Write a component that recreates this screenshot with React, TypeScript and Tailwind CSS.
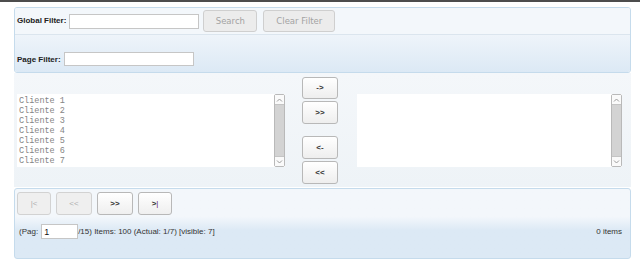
import React from 'react';

const sans = "font-['Liberation_Sans',Arial,sans-serif]";
const dejavu = "font-['DejaVu_Sans',Verdana,sans-serif]";

function Scrollbar() {
  return (
    <div className="flex w-[11px] shrink-0 flex-col rounded-[2px] border border-[#b9b9b9] bg-[#f4f4f4]">
      <div className="flex h-[10px] items-center justify-center border-b border-[#c4c4c4] bg-[#fafafa]">
        <svg width="7" height="4" viewBox="0 0 7 4">
          <path d="M1 3.5 L3.5 1 L6 3.5" fill="none" stroke="#9a9a9a" strokeWidth="1" />
        </svg>
      </div>
      <div className="flex-1 bg-[#d3d3d3]" />
      <div className="flex h-[10px] items-center justify-center border-t border-[#c4c4c4] bg-[#fafafa]">
        <svg width="7" height="4" viewBox="0 0 7 4">
          <path d="M1 0.5 L3.5 3 L6 0.5" fill="none" stroke="#9a9a9a" strokeWidth="1" />
        </svg>
      </div>
    </div>
  );
}

function ListBox({ items, width }: { items: string[]; width: string }) {
  return (
    <div className={`flex h-[73px] bg-white ${width}`}>
      <div className="flex-1 overflow-hidden pl-[2px] pt-[2px] font-['Liberation_Mono','DejaVu_Sans_Mono',monospace] text-[8.5px] leading-[10px] text-[#858585]">
        {items.map((it) => (
          <div key={it} className="whitespace-pre">
            {it}
          </div>
        ))}
      </div>
      <Scrollbar />
    </div>
  );
}

function MoveButton({ label, className = '' }: { label: string; className?: string }) {
  return (
    <button
      className={`flex w-[36px] items-center justify-center rounded-[3px] border border-[#b8b8b8] bg-gradient-to-b from-white to-[#eeeeee] ${sans} text-[8px] font-bold text-[#333] ${className}`}
    >
      {label}
    </button>
  );
}

function PagerButton({ children, disabled, width }: { children: React.ReactNode; disabled?: boolean; width: string }) {
  return (
    <button
      className={`flex h-[23px] items-center justify-center rounded-[3px] border ${width} ${sans} text-[8px] ${
        disabled
          ? 'border-[#d2d2d2] bg-[#efefef] text-[#b0b0b0]'
          : 'border-[#b8b8b8] bg-gradient-to-b from-white to-[#efefef] font-bold text-[#333]'
      }`}
    >
      {children}
    </button>
  );
}

export default function App() {
  const clientes = Array.from({ length: 7 }, (_, i) => `Cliente ${i + 1}`);

  return (
    <div className="h-[273px] w-[640px] overflow-hidden bg-white">
      <div className="h-[2px] bg-[#4d4d4d]" />

      {/* Filters */}
      <div className="ml-[14px] mr-[9px] mt-[5px] overflow-hidden rounded-[3px] border border-[#c5dbec]">
        <div className="flex h-[27px] items-center border-b border-[#dbe5ee] bg-[#f3f7fb] pl-[2px]">
          <span className={`${sans} text-[8px] font-bold text-[#222]`}>Global Filter:</span>
          <input className="ml-[3px] h-[15px] w-[130px] border border-[#c6c6c6] bg-white" />
          <button
            className={`ml-[4px] h-[22px] w-[54px] rounded-[3px] border border-[#cfcfcf] bg-[#ececec] ${dejavu} text-[8.5px] text-[#a3a3a3]`}
          >
            Search
          </button>
          <button
            className={`ml-[6px] h-[22px] w-[72px] rounded-[3px] border border-[#cfcfcf] bg-[#ececec] ${dejavu} text-[8.5px] text-[#a3a3a3]`}
          >
            Clear Filter
          </button>
        </div>
        <div className="flex h-[37px] items-end bg-gradient-to-b from-[#eef4fa] to-[#dce9f5] pb-[6px] pl-[2px]">
          <span className={`${sans} text-[8px] font-bold text-[#222]`}>Page Filter:</span>
          <input className="ml-[3px] h-[14px] w-[130px] border border-[#c6c6c6] bg-white" />
        </div>
      </div>

      {/* Pick list */}
      <div className="ml-[14px] mr-[9px] flex h-[114px] bg-gradient-to-b from-[#f4f7fa] to-[#eef3f7]">
        <div className="ml-[3px] mt-[21px]">
          <ListBox items={clientes} width="w-[268px]" />
        </div>
        <div className="ml-[17px] mt-[4px] flex flex-col">
          <MoveButton label="->" className="h-[22px]" />
          <MoveButton label=">>" className="mt-[2px] h-[23px]" />
          <MoveButton label="<-" className="mt-[12px] h-[23px]" />
          <MoveButton label="<<" className="mt-[2px] h-[23px]" />
        </div>
        <div className="ml-[19px] mt-[21px]">
          <ListBox items={[]} width="w-[265px]" />
        </div>
      </div>

      {/* Pager */}
      <div className="ml-[14px] mr-[9px] mt-[1px] h-[71px] rounded-[3px] border border-[#c5dbec] bg-gradient-to-b from-[#f3f7fb] from-40% to-[#dce9f5] to-60% pl-[2px] pt-[3px]">
        <div className="flex gap-[5px]">
          <PagerButton disabled width="w-[34px]">|&lt;</PagerButton>
          <PagerButton disabled width="w-[36px]">&lt;&lt;</PagerButton>
          <PagerButton width="w-[36px]">&gt;&gt;</PagerButton>
          <PagerButton width="w-[34px]">
            &gt;<span className="font-normal text-[#6a1a6a]">|</span>
          </PagerButton>
        </div>
        <div className={`mt-[9px] flex items-center pr-[8px] ${sans} text-[8px] text-[#333]`}>
          <span className="ml-[2px]">(Pag:</span>
          <input
            defaultValue="1"
            className="ml-[3px] h-[15px] w-[37px] border border-[#c6c6c6] bg-white pl-[2px] text-[9px] text-[#111]"
          />
          <span>/15) Items: 100 (Actual: 1/7) [visible: 7]</span>
          <span className="ml-auto">0 items</span>
        </div>
      </div>
    </div>
  );
}
